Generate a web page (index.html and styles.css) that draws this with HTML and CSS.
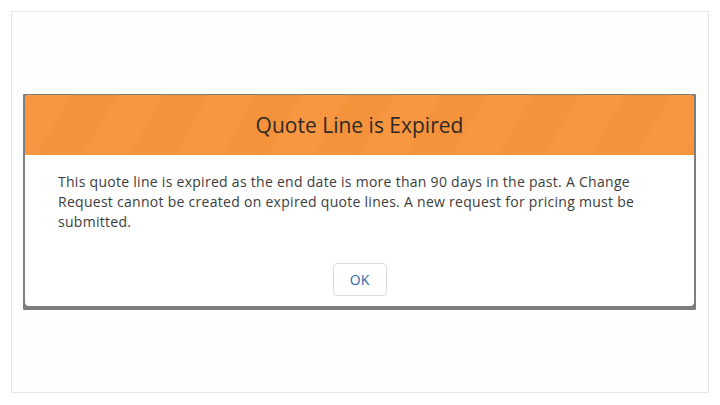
FILE: index.html
```html
<!DOCTYPE html>
<html lang="en">
<head>
    <meta charset="UTF-8">
    <meta name="viewport" content="width=device-width, initial-scale=1.0">
    <title>Quote Line is Expired</title>
    <link rel="stylesheet" href="styles.css">
</head>
<body>
    <div class="frame">
        <div class="backdrop">
            <div class="dialog">
                <div class="dialog-header">
                    <h1>Quote Line is Expired</h1>
                </div>
                <div class="dialog-body">
                    <p>This quote line is expired as the end date is more than 90 days in the past. A Change Request cannot be created on expired quote lines. A new request for pricing must be submitted.</p>
                    <div class="button-row">
                        <button>OK</button>
                    </div>
                </div>
            </div>
        </div>
    </div>
</body>
</html>
```
FILE: styles.css
```css
body {
    margin: 0;
    padding: 0;
    background: #fff;
    font-family: "Open Sans", Arial, sans-serif;
}
.frame {
    margin: 11px;
    height: 382px;
    box-sizing: border-box;
    border: 1px solid #e6e6e6;
    background: #fefefe;
    padding: 82px 12px 0 11px;
}
.backdrop {
    background: #7d7d7d;
    padding: 1px 2px 4px 2px;
    border-radius: 1px;
}
.dialog {
    background: #fff;
    border-radius: 4px;
    overflow: hidden;
}
.dialog-header {
    height: 60px;
    display: flex;
    align-items: center;
    justify-content: center;
    background-color: #f8943d;
    background-image: repeating-linear-gradient(120deg, rgba(255,255,255,0.025) 0 40px, rgba(0,0,0,0.012) 40px 80px);
}
.dialog-header h1 {
    margin: 0;
    font-size: 21px;
    font-weight: 400;
    color: #2e2a26;
}
.dialog-body {
    padding: 17px 33px 10px 33px;
}
.dialog-body p {
    margin: 0;
    font-size: 14px;
    line-height: 20px;
    letter-spacing: 0.28px;
    color: #3c3c3c;
}
.button-row {
    margin-top: 31px;
    display: flex;
    justify-content: center;
}
button {
    width: 54px;
    height: 33px;
    font-family: "Open Sans", Arial, sans-serif;
    font-size: 14px;
    color: #2b67a8;
    background: #fff;
    border: 1px solid #dcdcdc;
    border-radius: 4px;
    cursor: pointer;
}
```
